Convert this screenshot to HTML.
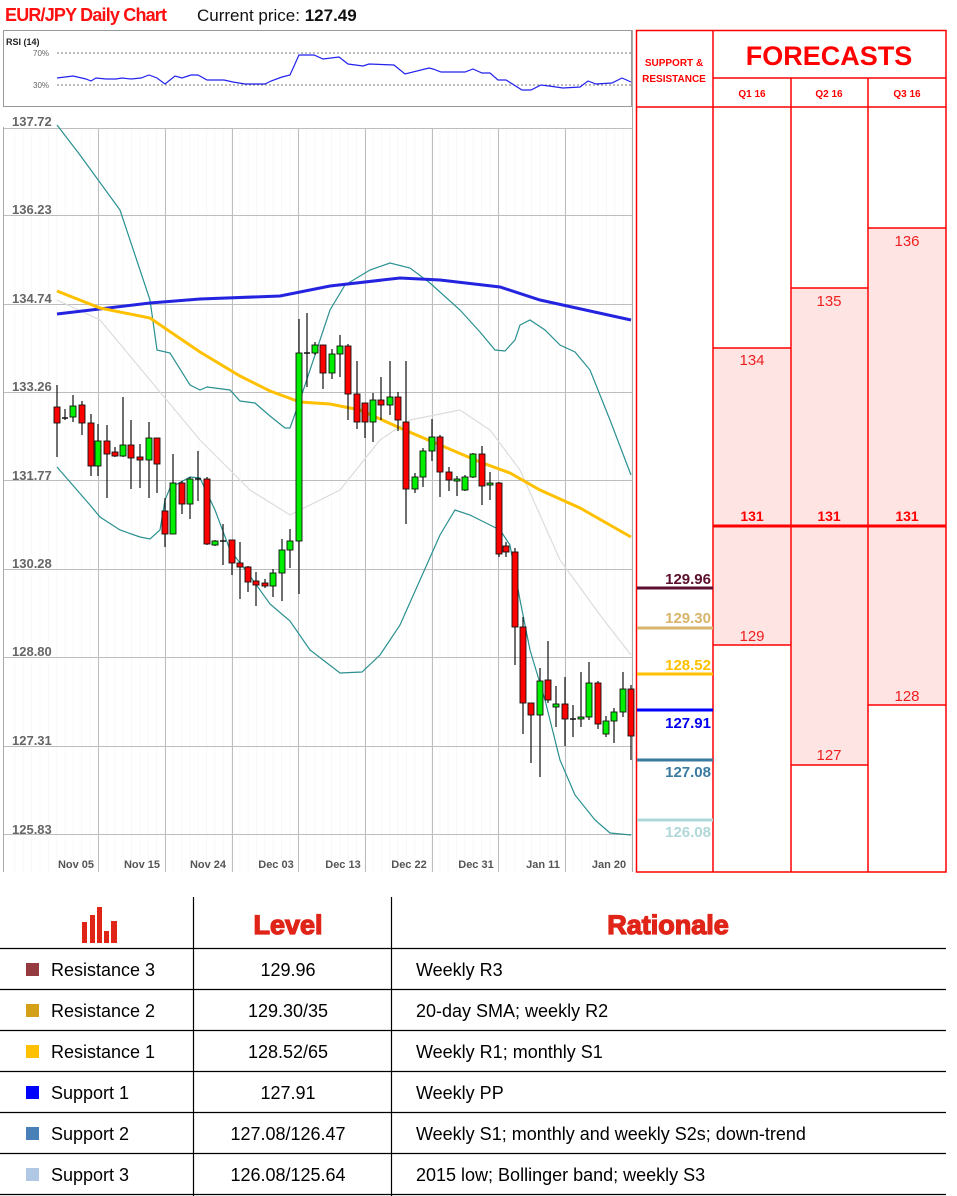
<!DOCTYPE html>
<html><head><meta charset="utf-8">
<style>
html,body{margin:0;padding:0;background:#fff;width:957px;height:1196px;overflow:hidden}
svg{display:block}
text{font-family:"Liberation Sans",sans-serif}
</style></head><body>
<svg id="s" width="957" height="1196" viewBox="0 0 957 1196" xmlns="http://www.w3.org/2000/svg">
<text x="5" y="21" font-size="18" fill="#ff1010" font-weight="bold" textLength="162">EUR/JPY Daily Chart</text>
<text x="197" y="21" font-size="17" fill="#111">Current price: <tspan font-weight="bold">127.49</tspan></text>

<rect x="3.5" y="30.5" width="628" height="76" fill="#fff" stroke="#999"/>
<text x="6" y="45" font-size="9" font-weight="bold" fill="#222">RSI (14)</text>
<text x="33" y="56" font-size="8" fill="#666">70%</text>
<text x="33" y="88" font-size="8" fill="#666">30%</text>
<line x1="57" y1="53" x2="631" y2="53" stroke="#777" stroke-dasharray="2,2"/>
<line x1="57" y1="85" x2="631" y2="85" stroke="#777" stroke-dasharray="2,2"/>
<polyline fill="none" stroke="#2222ee" stroke-width="1.2" points="57,78 73,76 86,79 91,81 96,78 106,79 116,79 122,78 131,79 141,78 149,75 157,78 165,84 175,76 182,78 191,75 198,75 207,80 224,80 233,82 245,84 265,84 271,81 282,77 290,75 299,55 314,55 323,59 339,57 348,64 363,66 369,64 394,65 405,74 429,68 433,69 441,72 465,72 473,69 482,73 490,73 498,80 506,80 522,90 531,90 541,85 549,86 563,88 580,87 588,81 596,84 612,83 622,78 631,82"/>

<g id="grid"></g>
<line x1="3.5" y1="127" x2="3.5" y2="872" stroke="#aaa"/>
<line x1="632.5" y1="30" x2="632.5" y2="872" stroke="#aaa"/>
<g font-size="13" font-weight="bold" fill="#666">
<text x="12" y="126">137.72</text><text x="12" y="214">136.23</text><text x="12" y="303">134.74</text>
<text x="12" y="391">133.26</text><text x="12" y="480">131.77</text><text x="12" y="568">130.28</text>
<text x="12" y="656">128.80</text><text x="12" y="745">127.31</text><text x="12" y="834">125.83</text>
</g>
<g font-size="11" font-weight="bold" fill="#555" text-anchor="middle">
<text x="76" y="868">Nov 05</text><text x="142" y="868">Nov 15</text><text x="208" y="868">Nov 24</text>
<text x="276" y="868">Dec 03</text><text x="343" y="868">Dec 13</text><text x="409" y="868">Dec 22</text>
<text x="476" y="868">Dec 31</text><text x="543" y="868">Jan 11</text><text x="609" y="868">Jan 20</text>
</g>

<polyline fill="none" stroke="#dcdcdc" stroke-width="1.2" points="57,300 100,320 150,380 200,440 250,490 290,515 340,490 380,440 410,420 460,410 490,430 520,470 560,560 600,615 631,655"/>
<polyline fill="none" stroke="#2a9090" stroke-width="1.2" points="57,125 80,155 120,210 150,300 157,350 170,353 190,385 200,390 207,387 230,390 240,401 255,403 270,416 285,428 290,428 300,400 310,370 330,310 345,285 370,270 390,263 410,268 430,283 460,310 480,332 495,350 505,351 515,340 520,325 530,320 545,330 560,345 575,352 590,370 610,420 631,475"/>
<polyline fill="none" stroke="#2a9090" stroke-width="1.2" points="57,467 70,482 90,505 100,517 120,530 140,537 150,539 160,530 165,500 170,488 190,477 200,478 215,510 230,550 250,576 270,604 290,621 310,650 340,673 362,672 380,655 400,625 420,580 440,535 455,510 470,515 490,525 500,530 510,545 520,600 530,650 545,700 560,760 575,795 595,820 610,833 631,835"/>
<polyline fill="none" stroke="#2424e0" stroke-width="3" points="57,314 150,303 200,299 280,296 330,286 400,278 440,280 500,287 540,300 590,311 631,320"/>
<polyline fill="none" stroke="#ffc000" stroke-width="3" points="57,291 100,308 150,318 200,352 240,376 270,391 300,402 330,404 360,410 400,428 440,445 480,462 510,473 540,490 580,508 631,537"/>
<g id="candles"></g>

<rect x="714" y="348" width="77" height="297" fill="#ffe4e4"/>
<rect x="792" y="288" width="76" height="477" fill="#ffe4e4"/>
<rect x="869" y="228" width="77" height="477" fill="#ffe4e4"/>
<g stroke="#ff0000" stroke-width="1.5">
<rect x="636.5" y="30.5" width="309.5" height="841.5" fill="none"/>
<line x1="713" y1="30" x2="713" y2="872"/>
<line x1="713" y1="78" x2="946" y2="78"/>
<line x1="791" y1="78" x2="791" y2="872"/>
<line x1="868" y1="78" x2="868" y2="872"/>
<line x1="636" y1="107" x2="946" y2="107"/>
<line x1="713" y1="348" x2="791" y2="348"/>
<line x1="713" y1="645" x2="791" y2="645"/>
<line x1="791" y1="288" x2="868" y2="288"/>
<line x1="791" y1="765" x2="868" y2="765"/>
<line x1="868" y1="228" x2="946" y2="228"/>
<line x1="868" y1="705" x2="946" y2="705"/>
</g>
<line x1="713" y1="526" x2="946" y2="526" stroke="#ff0000" stroke-width="3"/>
<g fill="#ff0000" text-anchor="middle" font-weight="bold">
<text x="674" y="66" font-size="10">SUPPORT &amp;</text>
<text x="674" y="82" font-size="10">RESISTANCE</text>
<text x="829" y="65" font-size="27">FORECASTS</text>
<text x="752" y="97" font-size="10">Q1 16</text>
<text x="829" y="97" font-size="10">Q2 16</text>
<text x="907" y="97" font-size="10">Q3 16</text>
<text x="752" y="521" font-size="14">131</text>
<text x="829" y="521" font-size="14">131</text>
<text x="907" y="521" font-size="14">131</text>
</g>
<g fill="#ee2020" text-anchor="middle" font-size="15">
<text x="752" y="365">134</text><text x="752" y="641">129</text>
<text x="829" y="306">135</text><text x="829" y="760">127</text>
<text x="907" y="246">136</text><text x="907" y="701">128</text>
</g>
<g stroke-width="3">
<line x1="637" y1="588" x2="713" y2="588" stroke="#5c0f2e"/>
<line x1="637" y1="628" x2="713" y2="628" stroke="#d8b56a"/>
<line x1="637" y1="674" x2="713" y2="674" stroke="#ffc000"/>
<line x1="637" y1="710" x2="713" y2="710" stroke="#0000ff"/>
<line x1="637" y1="760" x2="713" y2="760" stroke="#3a7aa0"/>
<line x1="637" y1="820" x2="713" y2="820" stroke="#b0d8d8"/>
</g>
<g font-size="15" font-weight="bold" text-anchor="end">
<text x="711" y="584" fill="#5c0f2e">129.96</text>
<text x="711" y="623" fill="#d8b56a">129.30</text>
<text x="711" y="670" fill="#ffc000">128.52</text>
<text x="711" y="728" fill="#0000ee">127.91</text>
<text x="711" y="777" fill="#3a7aa0">127.08</text>
<text x="711" y="837" fill="#b0d8d8">126.08</text>
</g>

<g stroke="#000" stroke-width="1.2">
<line x1="193.5" y1="897" x2="193.5" y2="1196"/>
<line x1="391.5" y1="897" x2="391.5" y2="1196"/>
<line x1="0" y1="948.5" x2="946" y2="948.5"/>
<line x1="0" y1="989.5" x2="946" y2="989.5"/>
<line x1="0" y1="1030.5" x2="946" y2="1030.5"/>
<line x1="0" y1="1071.5" x2="946" y2="1071.5"/>
<line x1="0" y1="1112.5" x2="946" y2="1112.5"/>
<line x1="0" y1="1153.5" x2="946" y2="1153.5"/>
<line x1="0" y1="1194.5" x2="946" y2="1194.5"/>
</g>
<g fill="#e02418">
<rect x="82" y="922" width="5" height="21"/><rect x="90" y="915" width="5" height="28"/>
<rect x="97" y="907" width="5" height="36"/><rect x="104" y="931" width="5" height="12"/>
<rect x="111" y="921" width="6" height="22"/>
</g>
<g fill="#e02418" font-size="27" font-weight="900" text-anchor="middle">
<text x="288" y="934" stroke="#e02418" stroke-width="1.3">Level</text>
<text x="668" y="934" stroke="#e02418" stroke-width="1.3">Rationale</text>
</g>
<rect x="26" y="963" width="13" height="13" fill="#953a3e"/>
<rect x="26" y="1004" width="13" height="13" fill="#d4a017"/>
<rect x="26" y="1045" width="13" height="13" fill="#ffc000"/>
<rect x="26" y="1086" width="13" height="13" fill="#0000ff"/>
<rect x="26" y="1127" width="13" height="13" fill="#4a80b8"/>
<rect x="26" y="1168" width="13" height="13" fill="#b0c8e4"/>
<g font-size="18" fill="#000">
<text x="51" y="976">Resistance 3</text><text x="51" y="1017">Resistance 2</text>
<text x="51" y="1058">Resistance 1</text><text x="51" y="1099">Support 1</text>
<text x="51" y="1140">Support 2</text><text x="51" y="1181">Support 3</text>
<g text-anchor="middle">
<text x="288" y="976">129.96</text><text x="288" y="1017">129.30/35</text>
<text x="288" y="1058">128.52/65</text><text x="288" y="1099">127.91</text>
<text x="288" y="1140">127.08/126.47</text><text x="288" y="1181">126.08/125.64</text>
</g>
<text x="416" y="976">Weekly R3</text><text x="416" y="1017">20-day SMA; weekly R2</text>
<text x="416" y="1058">Weekly R1; monthly S1</text><text x="416" y="1099">Weekly PP</text>
<text x="416" y="1140">Weekly S1; monthly and weekly S2s; down-trend</text>
<text x="416" y="1181">2015 low; Bollinger band; weekly S3</text>
</g>
</svg>
<script>
var NS="http://www.w3.org/2000/svg";
function el(p,t,a){var e=document.createElementNS(NS,t);for(var k in a)e.setAttribute(k,a[k]);p.appendChild(e);return e;}
var g=document.getElementById("grid");
for(var x=15;x<632;x+=8.33){el(g,"line",{x1:x,y1:128,x2:x,y2:872,stroke:"#f8f8f8"});}
[128,215,304,392,480,569,657,746,834].forEach(function(y){el(g,"line",{x1:3,y1:y+.5,x2:632,y2:y+.5,stroke:"#bdbdbd"});});
[98,165,232,298,365,432,498,565].forEach(function(x){el(g,"line",{x1:x+.5,y1:128,x2:x+.5,y2:872,stroke:"#bdbdbd"});});
var C=[[57,407,423,385,457,'r'],[65,418,418,409,420,'d'],[73,406,417,395,422,'g'],[82,405,423,401,435,'r'],[91,423,466,414,476,'r'],[98,441,466,424,476,'g'],[107,441,454,425,498,'r'],[115,452,456,447,457,'r'],[123,445,456,397,457,'g'],[131,445,458,420,489,'r'],[140,457,460,444,488,'r'],[149,438,460,422,498,'g'],[157,438,464,438,493,'r'],[165,511,534,498,547,'r'],[173,483,534,454,534,'g'],[182,483,504,481,514,'r'],[190,479,504,477,519,'g'],[198,479,479,451,501,'d'],[207,479,544,477,545,'r'],[215,541,545,540,546,'g'],[223,541,541,524,565,'d'],[232,540,563,540,575,'r'],[240,563,567,542,599,'r'],[248,567,582,566,592,'r'],[256,581,585,572,606,'r'],[265,583,586,579,588,'r'],[273,573,586,569,597,'g'],[282,550,573,539,601,'g'],[290,541,550,529,568,'g'],[299,353,541,319,594,'g'],[307,353,353,313,387,'d'],[315,345,353,342,355,'g'],[323,345,373,345,389,'r'],[332,354,373,349,379,'g'],[340,346,354,335,377,'g'],[348,346,394,344,420,'r'],[357,394,422,361,429,'r'],[365,403,422,403,438,'r'],[373,400,422,393,442,'g'],[381,400,405,377,420,'r'],[390,397,405,361,415,'g'],[398,397,420,392,431,'r'],[406,422,489,361,524,'r'],[415,477,489,473,493,'g'],[423,451,477,448,487,'g'],[432,437,451,419,461,'g'],[440,437,472,435,497,'r'],[449,472,480,467,491,'r'],[457,479,481,476,496,'g'],[465,477,490,475,491,'g'],[473,454,477,453,478,'g'],[482,454,486,446,505,'r'],[490,483,485,472,500,'g'],[499,483,554,482,557,'r'],[506,546,552,542,557,'r'],[515,552,627,548,665,'r'],[523,627,703,617,734,'r'],[531,703,715,703,763,'r'],[540,681,715,668,777,'g'],[548,680,700,641,703,'r'],[556,704,707,686,727,'g'],[565,704,719,677,746,'r'],[573,719,719,705,737,'d'],[581,717,719,672,727,'g'],[589,683,717,662,720,'g'],[598,683,724,681,729,'r'],[606,721,734,716,737,'g'],[614,712,721,708,743,'g'],[623,689,712,672,717,'g'],[631,689,736,685,760,'r']];
var cg=document.getElementById("candles");
C.forEach(function(c){
 el(cg,"line",{x1:c[0],y1:c[3],x2:c[0],y2:c[4],stroke:"#111","stroke-width":1.2});
 if(c[5]=='d'){el(cg,"line",{x1:c[0]-3,y1:c[1],x2:c[0]+3,y2:c[1],stroke:"#111","stroke-width":1.5});}
 else el(cg,"rect",{x:c[0]-3,y:c[1],width:6,height:Math.max(2,c[2]-c[1]),fill:c[5]=='r'?"#ff0000":"#00ee00",stroke:"#111","stroke-width":0.9});
});
</script>
</body></html>
